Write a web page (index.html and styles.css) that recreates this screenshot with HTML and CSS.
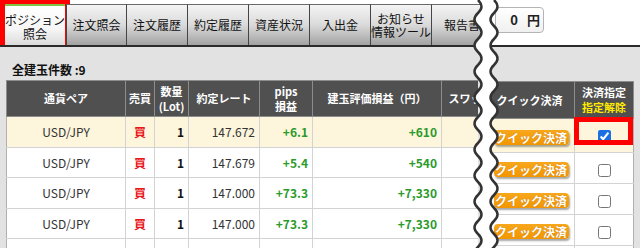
FILE: index.html
```html
<!DOCTYPE html>
<html lang="ja">
<head>
    <meta charset="UTF-8">
    <title>ポジション照会</title>
    <link rel="stylesheet" href="styles.css">
</head>
<body>
    <div class="top">
        <nav class="tabs">
            <div class="tab active">ポジション<br>照会</div>
            <div class="tab next">注文照会</div>
            <div class="tab">注文履歴</div>
            <div class="tab">約定履歴</div>
            <div class="tab">資産状況</div>
            <div class="tab">入出金</div>
            <div class="tab">お知らせ<br>情報ツール</div>
            <div class="tab">報告書</div>
        </nav>
        <div class="balance-wrap">
            <div class="balance"><span>0</span><span class="unit">円</span></div>
        </div>
    </div>

    <div class="main">
        <section class="positions">
            <div class="count">全建玉件数 :9</div>
            <table class="grid list">
                <colgroup>
                    <col style="width:119px"><col style="width:29px"><col style="width:34px"><col style="width:71px">
                    <col style="width:53px"><col style="width:129px"><col style="width:58px">
                </colgroup>
                <tr class="head">
                    <th>通貨ペア</th>
                    <th>売買</th>
                    <th>数量<br>(Lot)</th>
                    <th>約定レート</th>
                    <th>pips<br>損益</th>
                    <th>建玉評価損益（円）</th>
                    <th>スワップ</th>
                </tr>
                <tr class="sel">
                    <td class="pair">USD/JPY</td><td class="side">買</td><td class="num lot">1</td>
                    <td class="num">147.672</td><td class="num gain">+6.1</td><td class="num gain">+610</td><td></td>
                </tr>
                <tr>
                    <td class="pair">USD/JPY</td><td class="side">買</td><td class="num lot">1</td>
                    <td class="num">147.679</td><td class="num gain">+5.4</td><td class="num gain">+540</td><td></td>
                </tr>
                <tr>
                    <td class="pair">USD/JPY</td><td class="side">買</td><td class="num lot">1</td>
                    <td class="num">147.000</td><td class="num gain">+73.3</td><td class="num gain">+7,330</td><td></td>
                </tr>
                <tr>
                    <td class="pair">USD/JPY</td><td class="side">買</td><td class="num lot">1</td>
                    <td class="num">147.000</td><td class="num gain">+73.3</td><td class="num gain">+7,330</td><td></td>
                </tr>
                <tr>
                    <td class="pair">USD/JPY</td><td class="side">買</td><td class="num lot">1</td>
                    <td class="num">147.000</td><td class="num gain">+73.3</td><td class="num gain">+7,330</td><td></td>
                </tr>
            </table>
        </section>

        <section class="actions">
            <table class="grid quick-list">
                <colgroup>
                    <col style="width:90px"><col style="width:59px">
                </colgroup>
                <tr class="head">
                    <th>クイック決済</th>
                    <th>決済指定<br><span class="clear">指定解除</span></th>
                </tr>
                <tr class="sel first">
                    <td class="btn-cell"><span class="quick">クイック決済</span></td>
                    <td><input type="checkbox" checked></td>
                </tr>
                <tr>
                    <td class="btn-cell"><span class="quick">クイック決済</span></td>
                    <td><input type="checkbox"></td>
                </tr>
                <tr>
                    <td class="btn-cell"><span class="quick">クイック決済</span></td>
                    <td><input type="checkbox"></td>
                </tr>
                <tr>
                    <td class="btn-cell"><span class="quick">クイック決済</span></td>
                    <td><input type="checkbox"></td>
                </tr>
                <tr>
                    <td class="btn-cell"><span class="quick">クイック決済</span></td>
                    <td><input type="checkbox"></td>
                </tr>
            </table>
        </section>
    </div>

    <!-- break mark between the two halves of the screen -->
    <svg class="cut" width="52" height="248" viewBox="0 0 52 248">
        <path fill="#fff" d="M18,0 Q25,6.5 18,13 T18,26 T18,39 T18,52 T18,65 T18,78 T18,91 T18,104 T18,117 T18,130 T18,143 T18,156 T18,169 T18,182 T18,195 T18,208 T18,221 T18,234 T18,247 T18,260 L34,260 Q27,253.5 34,247 T34,234 T34,221 T34,208 T34,195 T34,182 T34,169 T34,156 T34,143 T34,130 T34,117 T34,104 T34,91 T34,78 T34,65 T34,52 T34,39 T34,26 T34,13 T34,0 Z"/>
        <path fill="none" stroke="#333" stroke-width="2.5" d="M18,0 Q25,6.5 18,13 T18,26 T18,39 T18,52 T18,65 T18,78 T18,91 T18,104 T18,117 T18,130 T18,143 T18,156 T18,169 T18,182 T18,195 T18,208 T18,221 T18,234 T18,247 T18,260"/>
        <path fill="none" stroke="#333" stroke-width="2.5" d="M34,0 Q41,6.5 34,13 T34,26 T34,39 T34,52 T34,65 T34,78 T34,91 T34,104 T34,117 T34,130 T34,143 T34,156 T34,169 T34,182 T34,195 T34,208 T34,221 T34,234 T34,247 T34,260"/>
    </svg>
    <div class="mark"></div>
</body>
</html>
```

FILE: styles.css
```css
body {
    margin: 0;
    width: 640px;
    height: 248px;
    overflow: hidden;
    position: relative;
    font-family: "Noto Sans CJK JP", sans-serif;
    color: #222;
    background: #e2e2e2;
}

/* tab bar */
.top {
    display: flex;
    height: 45px;
    background: #fff;
    border-bottom: 2px solid #2b2b2b;
}

.tabs {
    display: flex;
    flex: 0 0 480px;
    padding: 4px 0 0 5px;
    box-sizing: border-box;
    overflow: hidden;
}

.tab {
    flex: 0 0 61px;
    height: 41px;
    box-sizing: border-box;
    border-top: 1px solid #6a6a6a;
    border-right: 1px solid #454545;
    background: linear-gradient(#f4f4f4, #dadada 50%, #a2a2a2);
    display: flex;
    align-items: center;
    justify-content: center;
    text-align: center;
    font-size: 12px;
    line-height: 13.5px;
    color: #111;
}

.tab.next {
    margin-left: 1px;
    border-left: 1px solid #454545;
}

.tab.active {
    flex-basis: 60px;
    border: 0;
    border-top: 2px solid #80c342;
    background: linear-gradient(#fff, #f5f5f5 60%, #dcdcdc);
    outline: 5px solid #f00;
    padding-top: 2px;
}

.balance-wrap {
    margin-left: 15px;
    padding-top: 7px;
}

.balance {
    width: 49px;
    height: 26px;
    box-sizing: border-box;
    border: 1px solid #b4b4b4;
    border-radius: 4px;
    background: linear-gradient(#fff, #f0f0f0);
    text-align: right;
    padding-right: 3px;
    font-size: 13px;
    font-weight: bold;
    line-height: 24px;
}

.balance .unit {
    margin-left: 9px;
}

/* content */
.main {
    display: flex;
    height: 201px;
}

.positions {
    flex: 0 0 478px;
    overflow: hidden;
    padding-left: 6px;
    box-sizing: border-box;
}

.count {
    padding: 15px 0 3px 6px;
    font-size: 12px;
    font-weight: bold;
    line-height: 15px;
    color: #111;
}

.grid {
    border-collapse: collapse;
    table-layout: fixed;
}

.list {
    width: 493px;
}

.quick-list {
    width: 149px;
}

.grid th {
    background: #505050;
    color: #fff;
    font-size: 11px;
    font-weight: bold;
    line-height: 15px;
    border: 1px solid #8c8c8c;
    padding: 0;
    height: 35px;
    white-space: nowrap;
}

.grid td {
    border: 1px solid #d3d3d3;
    background: #fff;
    font-size: 12px;
    height: 29.5px;
    padding: 0 4px;
    white-space: nowrap;
}

.grid tr.sel td {
    background: #fdf6dc;
}

.list td:first-child {
    border-left-color: #b0b0b0;
}

.pair {
    text-align: center;
    color: #333;
}

.side {
    text-align: center;
    color: #e8161b;
    font-size: 13px;
    font-weight: bold;
}

.num {
    text-align: right;
    color: #333;
}

.lot {
    font-weight: bold;
    color: #111;
}

.gain {
    color: #2a9a2a;
    font-weight: bold;
    font-size: 13px;
}

.actions {
    margin-left: 6px;
    padding-top: 34px;
}

.quick-list th {
    height: 36px;
}

.quick-list td {
    text-align: center;
    padding: 0;
    height: 30px;
}

.quick-list td.btn-cell {
    padding-left: 3px;
}

.quick-list tr.first td {
    height: 33px;
}

.quick-list td:last-child {
    border-right-color: #b0b0b0;
}

.clear {
    color: #ffea00;
}

.quick {
    display: inline-block;
    width: 75px;
    height: 15px;
    line-height: 15px;
    border-radius: 4px;
    background: linear-gradient(#f8a71c, #f29600);
    color: #fff;
    font-size: 12px;
    font-weight: bold;
    text-shadow: 0 0 1px #b86a00;
    box-shadow: 1px 2px 2px rgba(0, 0, 0, 0.35);
    vertical-align: middle;
}

.quick-list input {
    margin: 0;
    width: 13px;
    height: 13px;
    vertical-align: middle;
    accent-color: #1a6fe3;
}

.quick-list tr.first input {
    margin-top: -3px;
}

/* overlays: the break mark and the red highlight */
.cut {
    position: absolute;
    left: 460px;
    top: 0;
}

.mark {
    position: absolute;
    left: 574px;
    top: 117px;
    width: 59px;
    height: 28px;
    box-sizing: border-box;
    border: 5px solid #f00;
}
```
